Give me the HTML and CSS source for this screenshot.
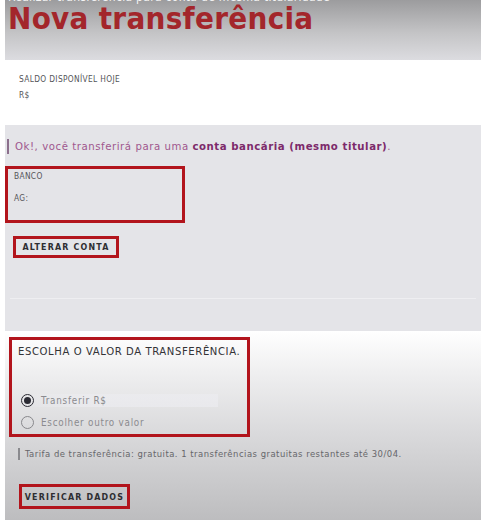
FILE: index.html
```html
<!DOCTYPE html>
<html lang="pt-BR">
<head>
<meta charset="utf-8">
<title>Nova transferência</title>
<link rel="stylesheet" href="styles.css">
</head>
<body>
<div class="page">
  <header class="hero">
    <p class="crumb">Realizar transferência para conta de mesma titularidade</p>
    <h1 class="title">Nova transferência</h1>
  </header>

  <section class="balance">
    <p class="label">SALDO DISPONÍVEL HOJE</p>
    <p class="label">R$</p>
  </section>

  <section class="account">
    <p class="notice">Ok!, você transferirá para uma <strong>conta bancária (mesmo titular)</strong>.</p>
    <div class="hl bank-box">
      <p class="label">BANCO</p>
      <p class="label">AG:</p>
    </div>
    <button class="hl btn btn-change">ALTERAR CONTA</button>
    <div class="sep"></div>
  </section>

  <section class="amount">
    <div class="hl amount-box">
      <p class="amount-title">ESCOLHA O VALOR DA TRANSFERÊNCIA.</p>
      <div class="options">
        <label class="option option-field"><span class="radio radio-on"></span>Transferir R$</label>
        <label class="option"><span class="radio"></span>Escolher outro valor</label>
      </div>
    </div>
    <p class="fee">Tarifa de transferência: gratuita. 1 transferências gratuitas restantes até 30/04.</p>
    <button class="hl btn btn-verify">VERIFICAR DADOS</button>
  </section>
</div>
</body>
</html>
```

FILE: styles.css
```css
* { box-sizing: border-box; }
html, body { margin: 0; padding: 0; background: #ffffff; }
body {
  font-family: "DejaVu Sans Condensed", "DejaVu Sans", sans-serif;
  width: 485px;
  height: 523px;
  overflow: hidden;
}
p { margin: 0; }

.page {
  margin-left: 5px;
  width: 476px;
  display: flex;
  flex-direction: column;
}

.hero {
  height: 60px;
  background: linear-gradient(#9c9c9e 0%, #c4c4c6 55%, #dcdce0 100%);
  padding-left: 3px;
  overflow: hidden;
}
.crumb {
  color: #f4f4f4;
  font-size: 12px;
  line-height: 12px;
  margin-top: -9px;
  height: 12px;
  letter-spacing: 0.3px;
  white-space: nowrap;
}
.title {
  margin: 0;
  font-size: 31px;
  line-height: 31px;
  font-weight: bold;
  color: #a3262b;
  letter-spacing: 0.3px;
}

.balance {
  height: 65px;
  background: #ffffff;
  padding: 14px 14px 0;
  display: flex;
  flex-direction: column;
  gap: 5px;
}
.label {
  font-size: 8.3px;
  color: #555559;
  letter-spacing: 0.35px;
  line-height: 11px;
}

.account {
  height: 206px;
  background: #e4e4e8;
  display: flex;
  flex-direction: column;
  align-items: flex-start;
  padding-top: 14px;
}
.notice {
  font-size: 11.3px;
  line-height: 15px;
  color: #a0578e;
  letter-spacing: 0.55px;
  border-left: 2px solid #8c6f8c;
  padding-left: 6px;
  margin-left: 2px;
}
.notice strong { color: #7d2a6b; font-weight: bold; }

.hl { border: 3px solid #b2141c; }

.bank-box {
  margin-top: 12px;
  width: 180px;
  height: 57px;
  padding: 2px 6px 0;
  display: flex;
  flex-direction: column;
  gap: 11px;
}
.btn {
  background: transparent;
  font-family: inherit;
  font-weight: bold;
  font-size: 8.8px;
  letter-spacing: 1.2px;
  color: #2e2e32;
  padding: 0;
  white-space: nowrap;
  cursor: pointer;
}
.btn-change {
  margin-top: 13px;
  margin-left: 8px;
  width: 106px;
  height: 22px;
}
.sep {
  margin-top: 40px;
  margin-left: 5px;
  width: 466px;
  height: 1px;
  background: #eeeef1;
}

.amount {
  height: 189px;
  background: linear-gradient(#ffffff 0%, #efeff0 22%, #d9d9db 55%, #bdbdbf 100%);
  display: flex;
  flex-direction: column;
  align-items: flex-start;
  padding-top: 6px;
}
.amount-box {
  margin-left: 4px;
  width: 241px;
  height: 100px;
  padding: 4px 6px 0;
  display: flex;
  flex-direction: column;
}
.amount-title {
  font-size: 11.2px;
  color: #333336;
  letter-spacing: 0.6px;
  line-height: 15px;
  font-weight: 300;
  white-space: nowrap;
}
.options {
  margin-top: 35px;
  display: flex;
  flex-direction: column;
  gap: 9px;
}
.option {
  display: flex;
  align-items: center;
  gap: 7px;
  font-size: 9.8px;
  color: #8b8b8f;
  letter-spacing: 0.75px;
  height: 13px;
  padding-left: 3px;
}
.option-field {
  background: linear-gradient(90deg, rgba(255,255,255,0) 0%, rgba(236,236,240,0.7) 30%, rgba(236,236,240,0.7) 100%);
  width: 200px;
}
.radio {
  width: 13px;
  height: 13px;
  border-radius: 50%;
  border: 1.5px solid #88888c;
  display: inline-flex;
  align-items: center;
  justify-content: center;
  flex: none;
}
.radio-on { border-color: #2b2b33; }
.radio-on::after {
  content: "";
  width: 7px;
  height: 7px;
  border-radius: 50%;
  background: #2b2b33;
}

.fee {
  margin-top: 11px;
  margin-left: 13px;
  font-size: 9.4px;
  line-height: 12px;
  color: #66666a;
  letter-spacing: 0.5px;
  border-left: 2px solid #8a8a8e;
  padding-left: 5px;
  white-space: nowrap;
}
.btn-verify {
  margin-top: 24px;
  margin-left: 14px;
  width: 111px;
  height: 25px;
}
```
